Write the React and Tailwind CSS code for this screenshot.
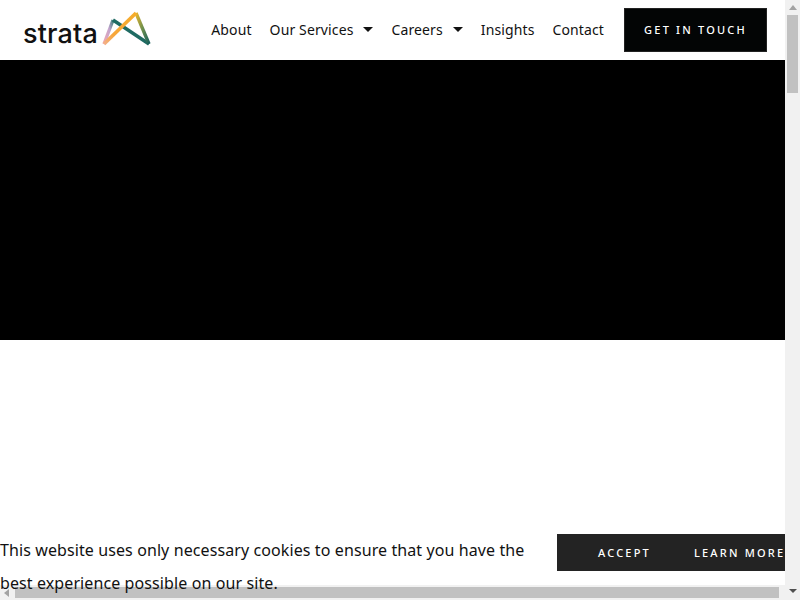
import React from 'react'

function Logo () {
  return (
    <div className="flex items-end">
      <span className="font-['Inter',sans-serif] text-[27px] leading-[30px] font-medium tracking-[0.15px] text-[#111]">strata</span>
      <svg width="50" height="36" viewBox="0 0 50 36" className="ml-[3px] mb-[2px]" fill="none">
        <defs>
          <linearGradient id="pinkLeg" x1="0" y1="1" x2="1" y2="0">
            <stop offset="0" stopColor="#f0a6b0" />
            <stop offset="0.6" stopColor="#c3a5cf" />
            <stop offset="1" stopColor="#3f7f7a" />
          </linearGradient>
          <linearGradient id="greenLeg" x1="0" y1="0" x2="1" y2="1">
            <stop offset="0" stopColor="#e8b52c" />
            <stop offset="0.5" stopColor="#6d8f4e" />
            <stop offset="1" stopColor="#17605c" />
          </linearGradient>
          <linearGradient id="orangeLine" x1="0" y1="1" x2="1" y2="0">
            <stop offset="0" stopColor="#f3b08a" />
            <stop offset="0.3" stopColor="#f7a63a" />
            <stop offset="1" stopColor="#f5ad2a" />
          </linearGradient>
        </defs>
        <path d="M3 33 L12 9" stroke="url(#pinkLeg)" strokeWidth="3.4" />
        <path d="M12 9 L48 33" stroke="#1f6b63" strokeWidth="3.4" />
        <path d="M35 2 L48 33" stroke="url(#greenLeg)" strokeWidth="3.4" />
        <path d="M3 33 L35 2" stroke="url(#orangeLine)" strokeWidth="3.6" />
      </svg>
    </div>
  )
}

function Caret () {
  return <span className="ml-[10px] w-0 h-0 border-x-[5px] border-x-transparent border-t-[5px] border-t-[#111]"></span>
}

function Header () {
  return (
    <header className="h-[60px] flex items-center bg-white pl-[23px] pr-[18px] justify-between">
      <Logo />
      <nav className="flex items-center text-[14px] tracking-[0.12px] text-[#111]">
        <a className="mr-[18px] mb-[2px]">About</a>
        <a className="mr-[18px] mb-[2px] flex items-center">Our Services<Caret /></a>
        <a className="mr-[18px] mb-[2px] flex items-center">Careers<Caret /></a>
        <a className="mr-[18px] mb-[2px]">Insights</a>
        <a className="mr-[20px] mb-[2px]">Contact</a>
        <a className="w-[143px] h-[44px] flex items-center justify-center bg-[#030505] border border-[#222] text-white text-[11px] font-medium tracking-[2.2px]">GET IN TOUCH</a>
      </nav>
    </header>
  )
}

function CookieBar () {
  return (
    <div className="absolute left-0 bottom-0 w-[785px] h-[66px] flex text-[#111] overflow-hidden">
      <p className="w-[557px] shrink-0 text-[16px] tracking-[0.1px] leading-[33px] pr-[20px]">This website uses only necessary cookies to ensure that you have the best experience possible on our site.</p>
      <div className="h-[37px] flex-1 bg-[#232323] flex items-center pt-[2px] text-white text-[11px] font-medium tracking-[2.2px] whitespace-nowrap">
        <span className="ml-[41px]">ACCEPT</span>
        <span className="ml-[43px]">LEARN MORE</span>
      </div>
    </div>
  )
}

function VScrollbar () {
  return (
    <div className="w-[15px] bg-[#f1f1f1] flex flex-col items-center shrink-0">
      <span className="mt-[5px] w-0 h-0 border-x-[4px] border-x-transparent border-b-[5px] border-b-[#a3a3a3]"></span>
      <div className="mt-[5px] w-[11px] h-[78px] bg-[#c1c1c1]"></div>
      <span className="mt-auto mb-[7px] w-0 h-0 border-x-[4px] border-x-transparent border-t-[4px] border-t-[#505050]"></span>
    </div>
  )
}

function HScrollbar () {
  return (
    <div className="absolute left-0 bottom-0 w-[785px] h-[15px] bg-[#f1f1f1] flex items-center">
      <span className="ml-[4px] w-0 h-0 border-y-[4px] border-y-transparent border-r-[5px] border-r-[#a3a3a3]"></span>
      <div className="ml-[6px] w-[764px] h-[11px] bg-[#c1c1c1]"></div>
    </div>
  )
}

export default function App () {
  return (
    <div className="relative w-[800px] h-[600px] overflow-hidden flex bg-white font-['Noto_Sans',sans-serif]">
      <div className="w-[785px] flex flex-col">
        <Header />
        <div className="h-[280px] bg-black"></div>
      </div>
      <HScrollbar />
      <CookieBar />
      <VScrollbar />
    </div>
  )
}
